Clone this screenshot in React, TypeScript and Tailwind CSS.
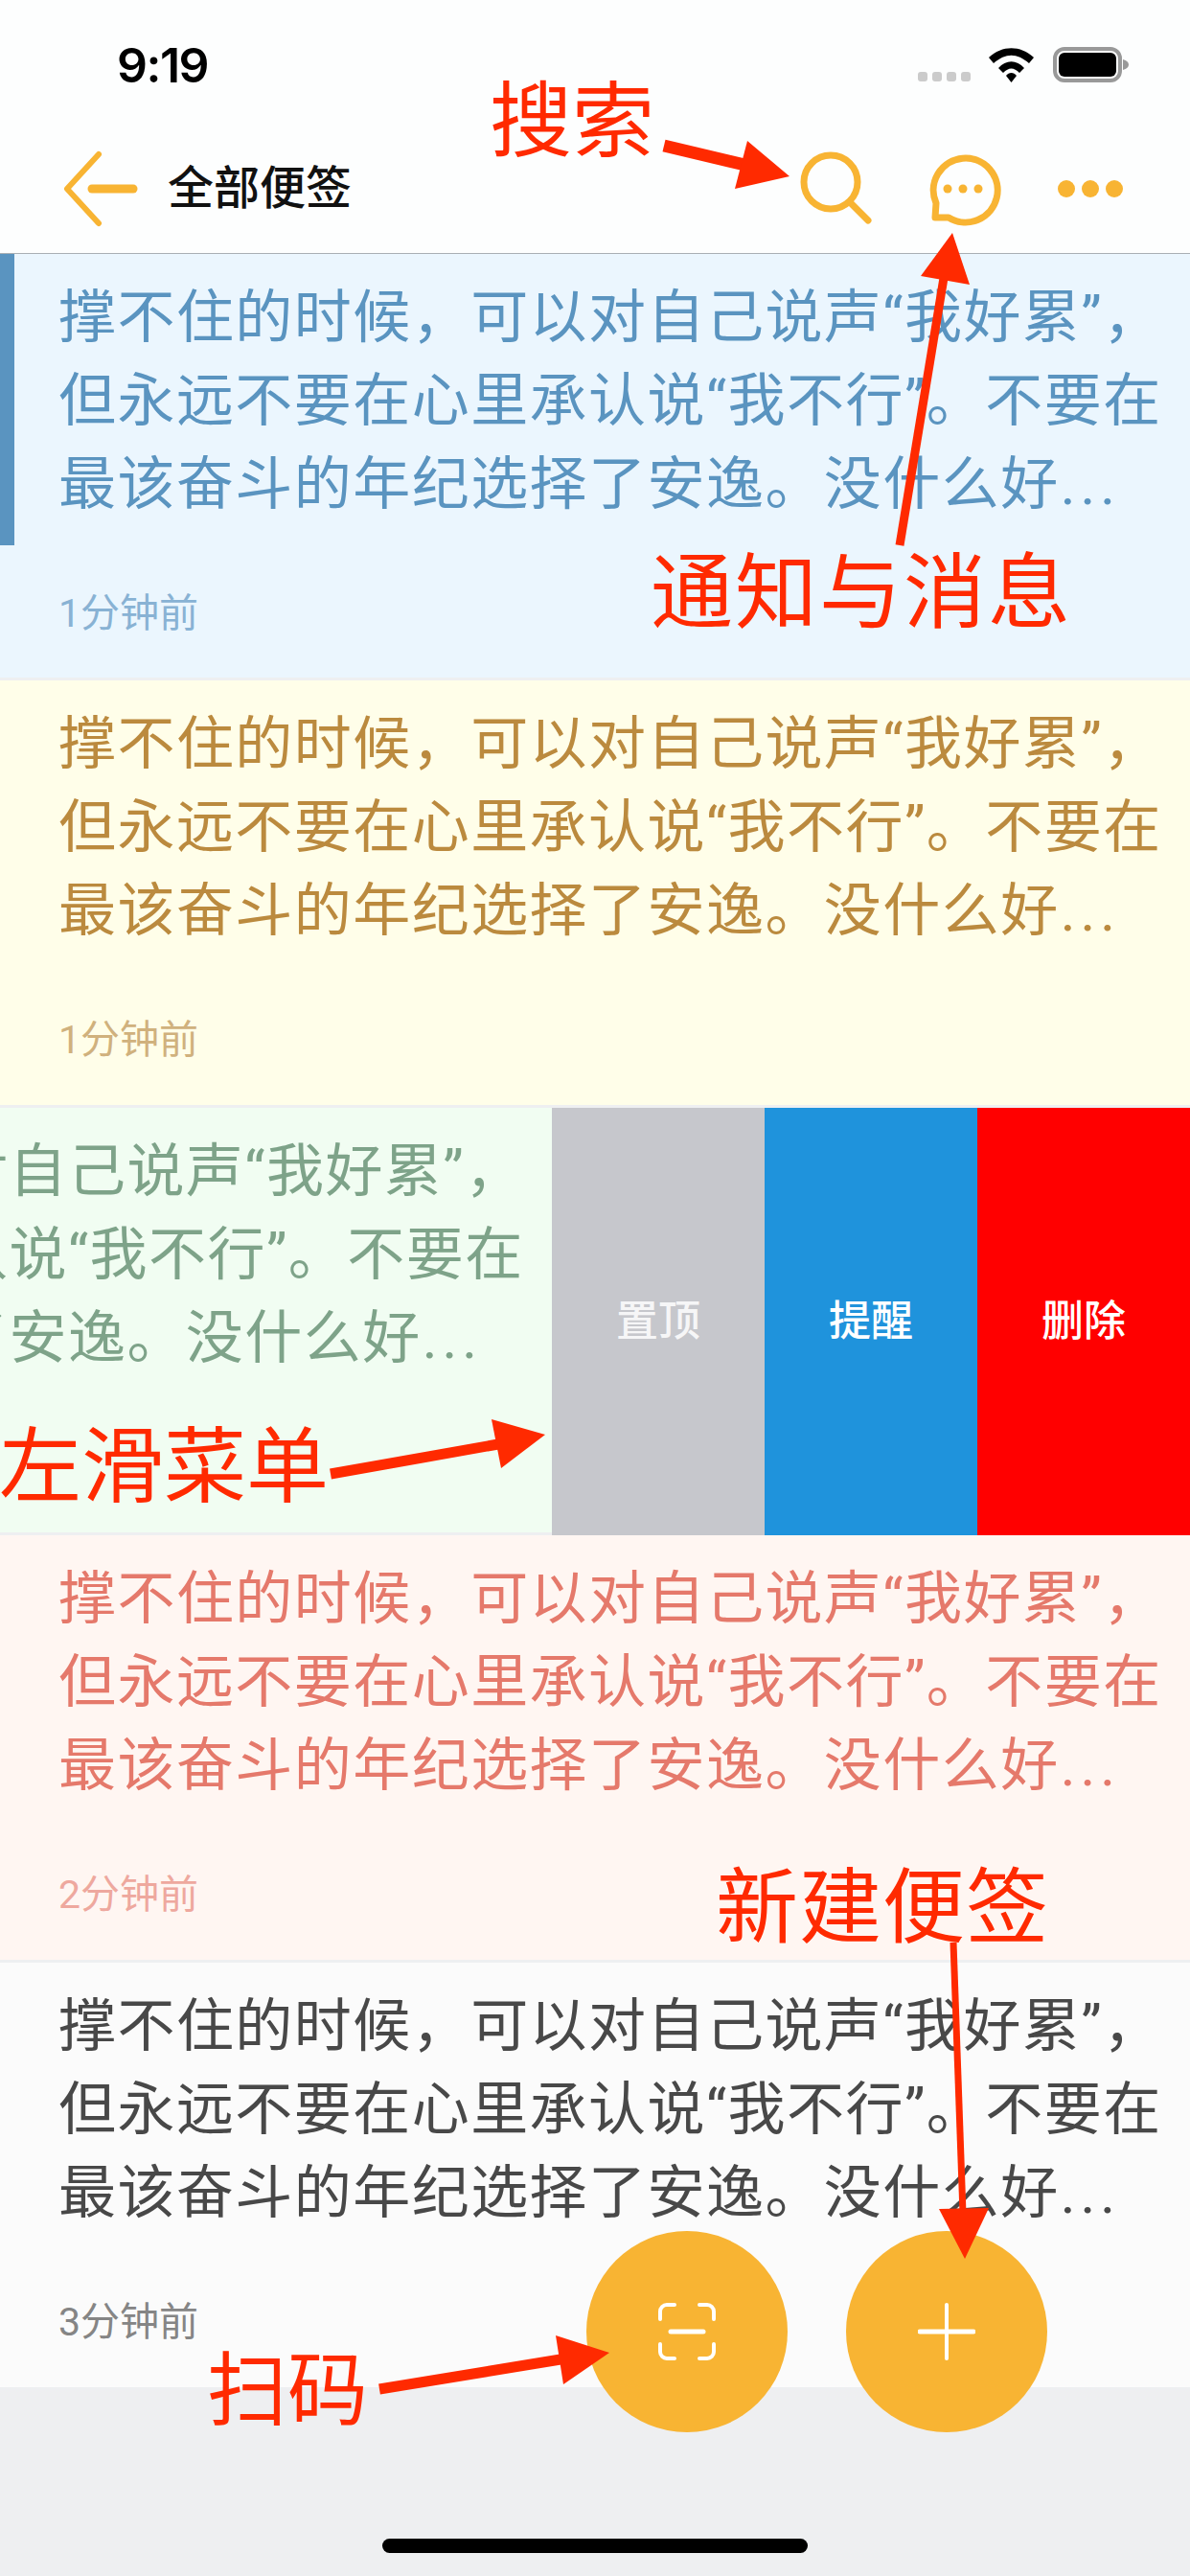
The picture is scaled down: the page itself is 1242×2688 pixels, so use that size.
import React from 'react';

const FONT = "font-['Roboto','Noto_Sans_CJK_SC',sans-serif]";
const ANNOTATION = "absolute whitespace-nowrap font-['Noto_Sans_CJK_SC',sans-serif] text-[86px] leading-none text-[#ff2a00]";

const LINES = [
  '撑不住的时候，可以对自己说声“我好累”，',
  '但永远不要在心里承认说“我不行”。不要在',
  '最该奋斗的年纪选择了安逸。没什么好',
];

const CARDS = [
  { bg: 'bg-[#ebf6fe]', text: 'text-[#5a94c0]', sub: 'text-[#88b2d4]', time: '1分钟前' },
  { bg: 'bg-[#fffee9]', text: 'text-[#bb8a3e]', sub: 'text-[#d0b17d]', time: '1分钟前' },
  { bg: 'bg-[#f1fdf2]', text: 'text-[#7ea389]', sub: 'text-[#a5c0ad]', time: '1分钟前' },
  { bg: 'bg-[#fff6f2]', text: 'text-[#e5796b]', sub: 'text-[#eea89e]', time: '2分钟前' },
  { bg: 'bg-[#fbfbfb]', text: 'text-[#484848]', sub: 'text-[#858585]', time: '3分钟前' },
];

const ACTIONS = [
  { label: '置顶', bg: 'bg-[#c6c7cc]', text: 'text-[#f6f6f7]' },
  { label: '提醒', bg: 'bg-[#1f93dc]', text: 'text-white' },
  { label: '删除', bg: 'bg-[#ff0000]', text: 'text-white' },
];

function Card({ card, height, bar }: { card: (typeof CARDS)[number]; height: string; bar?: boolean }) {
  return (
    <div className={`relative w-[1242px] shrink-0 pl-[61px] ${height} ${card.bg}`}>
      {bar && <div className="absolute left-0 top-0 h-[304px] w-[15px] bg-[#5a94c0]" />}
      <div className={`pt-[23px] text-[60px] leading-[87px] tracking-[1.45px] ${card.text}`}>
        {LINES.map((line, index) => (
          <div className="whitespace-nowrap" key={line}>
            {line}
            {index === 2 && <span className="ml-[1px] tracking-[5px]">...</span>}
          </div>
        ))}
      </div>
      <div className={`mt-[61px] text-[41px] leading-[60px] ${card.sub}`}>{card.time}</div>
    </div>
  );
}

function StatusIcons() {
  return (
    <div className="flex items-end">
      <div className="mb-[1px] flex gap-[5px]">
        {[0, 1, 2, 3].map((i) => (
          <div className="h-[10px] w-[10px] rounded-[3px] bg-[#cbcbcb]" key={i} />
        ))}
      </div>
      <svg className="ml-[19px]" width="47" height="36" viewBox="0 0 47 36">
        <path d="M0 10 C14 -3 33 -3 47 10 L42 16 C29 5 18 5 5 16 Z" fill="#000" />
        <path d="M10 21 C18 12 29 12 37 21 L32 26 C26 20 21 20 15 26 Z" fill="#000" />
        <path d="M18 29 C21 25 26 25 29 29 L23.5 36 Z" fill="#000" />
      </svg>
      <svg className="ml-[20px]" width="79" height="37" viewBox="0 0 79 37">
        <rect x="2" y="2" width="68" height="33" rx="10" fill="none" stroke="#999" strokeWidth="4" />
        <rect x="6" y="6" width="60" height="25" rx="6" fill="#000" />
        <path d="M73 13 C77 14 79 16 79 18.5 C79 21 77 23 73 24 Z" fill="#999" />
      </svg>
    </div>
  );
}

function Header() {
  return (
    <div className="h-[265px] border-b border-[#a9afb4] bg-[#fdfefe]">
      <div className="h-[49px]" />
      <div className="flex h-[37px] items-center justify-between pl-[122px] pr-[64px]">
        <span className="font-['Inter',sans-serif] text-[50px] font-semibold leading-none tracking-[-1.5px] text-black">9:19</span>
        <StatusIcons />
      </div>
      <div className="mt-[71px] flex items-center pl-[64px] pr-[70px]">
        <svg width="84" height="80" viewBox="0 0 84 80" fill="none" stroke="#f8b433" strokeLinecap="round" strokeLinejoin="round">
          <path d="M39 4 L6 40 L39 76" strokeWidth="6" />
          <path d="M32 40 H75" strokeWidth="9" />
        </svg>
        <span className="ml-[27px] text-[48px] font-medium leading-none text-[#111]">全部便签</span>
        <div className="flex-1" />
        <svg className="mt-[-2px]" width="80" height="80" viewBox="0 0 80 80" fill="none" stroke="#f8b433" strokeWidth="7" strokeLinecap="round">
          <circle cx="33" cy="34" r="28" />
          <path d="M54 56 L72 74" />
        </svg>
        <svg className="ml-[51px]" width="80" height="80" viewBox="0 0 80 80" fill="none" stroke="#f8b433" strokeWidth="7" strokeLinecap="round" strokeLinejoin="round">
          <path d="M12 55 A33.5 33.5 0 1 1 25 70 L11 70 Z" />
          <circle cx="24" cy="40" r="4.5" fill="#f8b433" stroke="none" />
          <circle cx="40" cy="40" r="4.5" fill="#f8b433" stroke="none" />
          <circle cx="56" cy="40" r="4.5" fill="#f8b433" stroke="none" />
        </svg>
        <div className="ml-[59px] flex gap-[7px]">
          {[0, 1, 2].map((i) => (
            <div className="h-[18px] w-[18px] rounded-full bg-[#f8b433]" key={i} />
          ))}
        </div>
      </div>
    </div>
  );
}

function Arrows() {
  const red = '#ff2a00';
  return (
    <svg className="pointer-events-none absolute left-0 top-0" width="1242" height="2688" viewBox="0 0 1242 2688">
      <path d="M693 152 L790 175" stroke={red} strokeWidth="13" />
      <polygon points="824,184 780,147 767,197" fill={red} />
      <path d="M939 569 L985 290" stroke={red} strokeWidth="9" />
      <polygon points="994,243 1012,297 961,288" fill={red} />
      <path d="M345 1538 L520 1507" stroke={red} strokeWidth="11" />
      <polygon points="569,1497 523,1532 513,1481" fill={red} />
      <path d="M995 2027 L1005 2310" stroke={red} strokeWidth="7" />
      <polygon points="1007,2357 980,2305 1032,2304" fill={red} />
      <path d="M396 2493 L585 2462" stroke={red} strokeWidth="11" />
      <polygon points="636,2455 588,2488 580,2437" fill={red} />
    </svg>
  );
}

export default function App() {
  return (
    <div className={`relative h-[2688px] w-[1242px] overflow-hidden bg-[#eeeff1] ${FONT}`}>
      <Header />
      <div className="h-[445px]">
        <Card card={CARDS[0]} height="h-[442px]" bar />
      </div>
      <div className="h-[446px]">
        <Card card={CARDS[1]} height="h-[443px]" />
      </div>
      <div className="flex h-[446px] items-start overflow-hidden">
        <div className="ml-[-666px]">
          <Card card={CARDS[2]} height="h-[443px]" />
        </div>
        {ACTIONS.map((a) => (
          <div className={`flex h-[446px] w-[222px] shrink-0 items-center justify-center text-[44px] font-medium ${a.bg} ${a.text}`} key={a.label}>
            {a.label}
          </div>
        ))}
      </div>
      <div className="h-[446px]">
        <Card card={CARDS[3]} height="h-[443px]" />
      </div>
      <Card card={CARDS[4]} height="h-[443px]" />

      <div className="absolute left-[612px] top-[2328px] flex h-[210px] w-[210px] items-center justify-center rounded-full bg-[#f8b433]">
        <svg width="60" height="60" viewBox="0 0 60 60" fill="none" stroke="#fff" strokeWidth="4" strokeLinecap="round">
          <path d="M2 17 V9 A7 7 0 0 1 9 2 H17" />
          <path d="M43 2 H51 A7 7 0 0 1 58 9 V17" />
          <path d="M2 43 V51 A7 7 0 0 0 9 58 H17" />
          <path d="M43 58 H51 A7 7 0 0 0 58 51 V43" />
          <path d="M13 30 H47" strokeWidth="5" />
        </svg>
      </div>
      <div className="absolute left-[883px] top-[2328px] flex h-[210px] w-[210px] items-center justify-center rounded-full bg-[#f8b433]">
        <svg width="60" height="60" viewBox="0 0 60 60" fill="none" stroke="#fff" strokeWidth="4" strokeLinecap="round">
          <path d="M2 30 H58" strokeWidth="5" />
          <path d="M30 2 V58" />
        </svg>
      </div>
      <div className="absolute left-[399px] top-[2649px] h-[15px] w-[444px] rounded-full bg-black" />

      <Arrows />
      <span className={`${ANNOTATION} left-[511px] top-[77px]`}>搜索</span>
      <span className={`${ANNOTATION} left-[679px] top-[569px] tracking-[2px]`}>通知与消息</span>
      <span className={`${ANNOTATION} left-[-1px] top-[1481px]`}>左滑菜单</span>
      <span className={`${ANNOTATION} left-[747px] top-[1941px] tracking-[1px]`}>新建便签</span>
      <span className={`${ANNOTATION} left-[216px] top-[2446px] !text-[84px]`}>扫码</span>
    </div>
  );
}
